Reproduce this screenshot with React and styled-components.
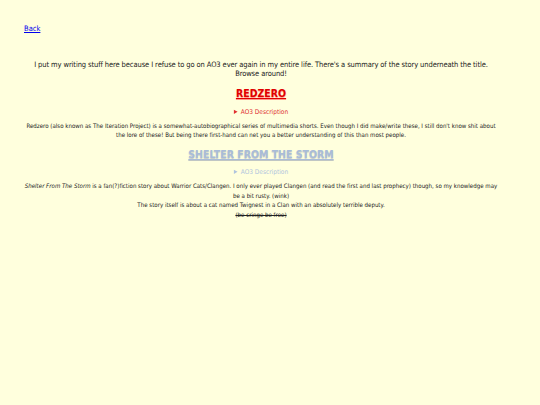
import React from 'react'
import styled, { createGlobalStyle } from 'styled-components'

const GlobalStyle = createGlobalStyle`
  html, body {
    margin: 0;
    padding: 0;
    background: #ffffdd;
  }
  body {
    font-family: "DejaVu Sans Condensed", "DejaVu Sans", Verdana, sans-serif;
    color: #222;
  }
`

const Page = styled.div`
  padding: 24px 42px 40px 24px;
`

const Nav = styled.nav`
  font-size: 7.5px;
  line-height: 9px;
`

const BackLink = styled.a`
  color: #0000ee;
  text-decoration: underline;
`

const Main = styled.main`
  text-align: center;
  margin-top: 28px;
`

const Intro = styled.p`
  font-size: 7.5px;
  letter-spacing: -0.1px;
  line-height: 8.5px;
  margin: 0 0 9px 0;
`

const Story = styled.section`
  margin-bottom: 8px;
`

const Title = styled.h2`
  font-size: 10.5px;
  font-weight: bold;
  margin: 0 0 8.5px 0;
  color: ${p => p.$color};
  text-decoration: underline;
  text-shadow: 0 1px 1px ${p => p.$shadow};
`

const Details = styled.details`
  font-size: 6.5px;
  color: ${p => p.$color};
  margin-bottom: 5px;

  summary {
    cursor: pointer;
  }
`

const Summary = styled.p`
  font-size: 6.1px;
  line-height: 9.5px;
  margin: 0;
`

const Strike = styled.s``

const App = () => {
  return (
    <>
      <GlobalStyle />
      <Page>
        <Nav>
          <BackLink href="#">Back</BackLink>
        </Nav>
        <Main>
          <Intro>
            I put my writing stuff here because I refuse to go on AO3 ever again in my entire life. There's a summary of the story underneath the title. Browse around!
          </Intro>

          <Story>
            <Title $color="#e00000" $shadow="rgba(255,80,80,0.6)">REDZERO</Title>
            <Details $color="#e03030">
              <summary>AO3 Description</summary>
            </Details>
            <Summary>
              Redzero (also known as The Iteration Project) is a somewhat-autobiographical series of multimedia shorts. Even though I did make/write these, I still don't know shit about the lore of these! But being there first-hand can net you a better understanding of this than most people.
            </Summary>
          </Story>

          <Story>
            <Title $color="#a9bcd8" $shadow="rgba(150,160,180,0.6)">SHELTER FROM THE STORM</Title>
            <Details $color="#b0c4de">
              <summary>AO3 Description</summary>
            </Details>
            <Summary>
              <i>Shelter From The Storm</i> is a fan(?)fiction story about Warrior Cats/Clangen. I only ever played Clangen (and read the first and last prophecy) though, so my knowledge may be a bit rusty. (wink)
              <br />
              The story itself is about a cat named Twignest in a Clan with an absolutely terrible deputy.
              <br />
              <Strike>(be cringe be free)</Strike>
            </Summary>
          </Story>
        </Main>
      </Page>
    </>
  )
}

export default App
